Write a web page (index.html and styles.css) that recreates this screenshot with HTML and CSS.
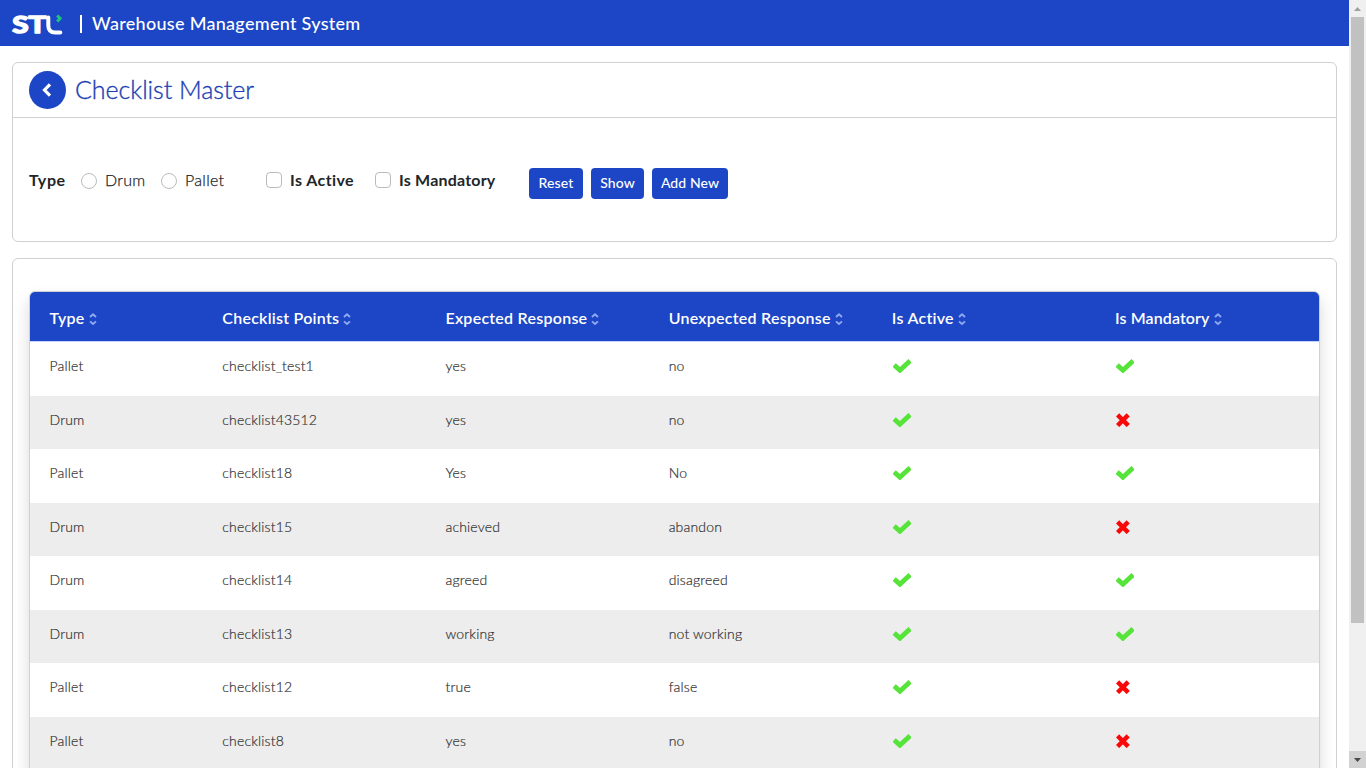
FILE: index.html
```
<!DOCTYPE html>
<html lang="en">
<head>
<meta charset="utf-8">
<title>Warehouse Management System</title>
<link rel="stylesheet" href="styles.css">
</head>
<body>
<svg width="0" height="0" class="defs">
  <symbol id="sort" viewBox="0 0 8 14"><path d="M1 5 4 2.200 7 5M1 9.400l3 2.600 3-2.600" fill="none" stroke="currentColor" stroke-width="1.900" stroke-linejoin="round"/></symbol>
  <symbol id="check" viewBox="0 0 18 14"><path d="M2.900 7.600 6.900 11.200 15.300 3.500" fill="none" stroke="#57e43a" stroke-width="4.900" stroke-linecap="square"/></symbol>
  <symbol id="cross" viewBox="0 0 14 14"><path d="M3.200 3.500l7.400 7.400M10.600 3.500l-7.400 7.400" fill="none" stroke="#f80808" stroke-width="4.500" stroke-linecap="square"/></symbol>
</svg>
<div class="window">
  <div class="page">
    <header class="topbar">
      <svg class="logo" viewBox="0 0 52 22" width="52" height="22">
        <text class="logo-text" x=".3" y="20.3" textLength="34" lengthAdjust="spacingAndGlyphs">ST</text>
        <path d="M36.300 4.500v8q0 7 7 7H48.300" fill="none" stroke="#fff" stroke-width="4" stroke-linecap="round"/>
        <path d="M45.200 2.500l2.900 2.900-2.900 3.200" fill="none" stroke="#1fc281" stroke-width="3"/>
      </svg>
      <span class="divider"></span>
      <span class="brand">Warehouse Management System</span>
    </header>
    <main class="content">
      <section class="card filter-card">
        <div class="card-head">
          <button class="back"><svg viewBox="0 0 12 18" width="12" height="18"><path d="M9 3.400 3.500 9l5.500 5.600" fill="none" stroke="#fff" stroke-width="3.200"/></svg></button>
          <h1>Checklist Master</h1>
        </div>
        <div class="filters">
          <span class="label type">Type</span>
          <span class="radio"></span><span class="option drum">Drum</span>
          <span class="radio"></span><span class="option pallet">Pallet</span>
          <span class="box"></span><span class="label active">Is Active</span>
          <span class="box"></span><span class="label mandatory">Is Mandatory</span>
          <div class="buttons">
            <button class="btn reset">Reset</button><button class="btn show">Show</button><button class="btn add">Add New</button>
          </div>
        </div>
      </section>
      <section class="card table-card">
        <div class="table">
          <div class="row head">
            <span>Type<svg><use href="#sort"/></svg></span><span>Checklist Points<svg><use href="#sort"/></svg></span><span>Expected Response<svg><use href="#sort"/></svg></span><span>Unexpected Response<svg><use href="#sort"/></svg></span><span>Is Active<svg><use href="#sort"/></svg></span><span class="tight">Is Mandatory<svg><use href="#sort"/></svg></span>
          </div>
          <div class="row"><span>Pallet</span><span>checklist_test1</span><span>yes</span><span>no</span><svg class="ic"><use href="#check"/></svg><svg class="ic"><use href="#check"/></svg></div>
          <div class="row"><span>Drum</span><span>checklist43512</span><span>yes</span><span>no</span><svg class="ic"><use href="#check"/></svg><svg class="ix"><use href="#cross"/></svg></div>
          <div class="row"><span>Pallet</span><span>checklist18</span><span>Yes</span><span>No</span><svg class="ic"><use href="#check"/></svg><svg class="ic"><use href="#check"/></svg></div>
          <div class="row"><span>Drum</span><span>checklist15</span><span>achieved</span><span>abandon</span><svg class="ic"><use href="#check"/></svg><svg class="ix"><use href="#cross"/></svg></div>
          <div class="row"><span>Drum</span><span>checklist14</span><span>agreed</span><span>disagreed</span><svg class="ic"><use href="#check"/></svg><svg class="ic"><use href="#check"/></svg></div>
          <div class="row"><span>Drum</span><span>checklist13</span><span>working</span><span>not working</span><svg class="ic"><use href="#check"/></svg><svg class="ic"><use href="#check"/></svg></div>
          <div class="row"><span>Pallet</span><span>checklist12</span><span>true</span><span>false</span><svg class="ic"><use href="#check"/></svg><svg class="ix"><use href="#cross"/></svg></div>
          <div class="row"><span>Pallet</span><span>checklist8</span><span>yes</span><span>no</span><svg class="ic"><use href="#check"/></svg><svg class="ix"><use href="#cross"/></svg></div>
        </div>
      </section>
    </main>
  </div>
  <div class="scrollbar">
    <div class="arrow"><svg width="7" height="4" viewBox="0 0 7 4"><path d="M0 4 3.500 0 7 4z" fill="#a0a0a0"/></svg></div>
    <div class="thumb"></div>
    <div class="arrow down"><svg width="7" height="4" viewBox="0 0 7 4"><path d="M0 0h7L3.500 4z" fill="#484848"/></svg></div>
  </div>
</div>
</body>
</html>
```
FILE: styles.css
```
* { box-sizing: border-box; }
body { margin: 0; background: #fff; font-family: Lato, "Open Sans", sans-serif; color: #212529; }
button { font-family: inherit; border: 0; padding: 0; color: #fff; background: #1c46c5; }
.defs { display: none; }
.window { display: flex; height: 768px; overflow: hidden; }
.page { flex: 1; min-width: 0; height: 768px; overflow: hidden; }

.topbar { display: flex; align-items: center; height: 46px; padding: 1px 12px 0; background: #1c46c5; color: #fff; white-space: nowrap; }
.logo { flex: none; overflow: visible; }
.logo-text { font: 700 23px Lato, sans-serif; fill: #fff; stroke: #fff; stroke-width: 1.6; stroke-linejoin: round; }
.divider { width: 1.500px; height: 18px; margin: 0 10.500px 0 16px; background: #fff; }
.brand { padding-bottom: 2px; font-size: 18px; font-weight: 500; line-height: 22px; letter-spacing: .29px; }

.content { padding: 16px 12px 0; }
.card { border: 1px solid #cfd0d2; border-radius: 6px; background: #fff; }
.filter-card { height: 180px; margin-bottom: 16px; }
.card-head { display: flex; align-items: center; gap: 9px; height: 55px; padding-left: 16px; border-bottom: 1px solid #cfd0d2; }
.back { display: flex; align-items: center; justify-content: center; width: 37px; height: 38px; padding-right: 2px; border-radius: 50%; }
h1 { margin: 0; padding-bottom: 2px; font-size: 25px; font-weight: 300; line-height: 30px; letter-spacing: -.05px; color: #1c3fb4; -webkit-text-stroke: .35px #1c3fb4; }

.filters { display: flex; align-items: center; height: 124px; padding-left: 16px; font-size: 16px; white-space: nowrap; }
.label, .option { padding-bottom: 2px; }
.label { font-weight: 700; letter-spacing: .2px; }
.option { font-weight: 300; letter-spacing: .3px; -webkit-text-stroke: .25px #212529; }
.type { width: 52px; letter-spacing: .6px; }
.radio, .box { flex: none; width: 16px; height: 16px; margin-right: 8px; border: 1px solid #b9bbbd; }
.radio { border-radius: 50%; position: relative; top: 1px; }
.box { border-radius: 4px; }
.drum { width: 56px; }
.pallet { width: 81px; }
.active { width: 85px; letter-spacing: .42px; }
.mandatory { width: 130px; }
.buttons { display: flex; gap: 8px; padding-top: 6px; }
.btn { height: 31px; padding-bottom: 2px; border-radius: 4px; font-size: 14px; font-weight: 500; letter-spacing: .1px; }
.reset { width: 54px; }
.show { width: 53px; }
.add { width: 76px; }

.table-card { height: 640px; padding: 32px 16px 0; }
.table { width: 1291px; height: 600px; border: 1px solid #cfd0d2; border-radius: 6px; overflow: hidden; box-shadow: 0 8px 16px rgba(0,0,0,.15); }
.row { display: grid; grid-template-columns: 172.800px 223.200px 223.200px 223.200px 223.200px 1fr; align-items: center; height: 53.550px; padding: 0 0 5.500px 19.500px; font-size: 14px; font-weight: 300; letter-spacing: .17px; color: #333; -webkit-text-stroke: .2px #333; }
.row:not(.head) span { padding-bottom: 1px; }
.row:nth-child(odd) { background: #ededed; }
.row.head { height: 50px; padding: 3px 0 1px 19.500px; background: #1c46c5; color: #fff; font-size: 16px; font-weight: 600; letter-spacing: .25px; border-bottom: 1px solid #c5d4fa; -webkit-text-stroke: 0; }
.head span { display: flex; align-items: center; gap: 4px; white-space: nowrap; }
.head .tight { letter-spacing: .1px; }
.head svg { width: 8px; height: 14px; margin-top: 2px; color: #8fa8f0; }
.ic, .ix { height: 14px; margin-left: 1px; }
.ic { width: 18px; }
.ix { width: 14px; }

.scrollbar { display: flex; flex-direction: column; width: 17px; height: 768px; background: #f0f0f0; }
.arrow { display: flex; align-items: center; justify-content: center; width: 17px; height: 17px; }
.thumb { width: 13px; height: 606px; margin-left: 2px; background: #c1c1c1; }
.down { margin-top: auto; background: #d2d2d2; }
```
